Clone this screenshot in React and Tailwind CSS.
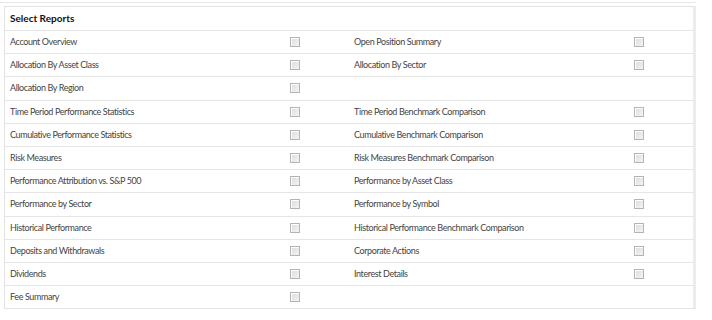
const rows = [
  ['Account Overview', 'Open Position Summary'],
  ['Allocation By Asset Class', 'Allocation By Sector'],
  ['Allocation By Region', null],
  ['Time Period Performance Statistics', 'Time Period Benchmark Comparison'],
  ['Cumulative Performance Statistics', 'Cumulative Benchmark Comparison'],
  ['Risk Measures', 'Risk Measures Benchmark Comparison'],
  ['Performance Attribution vs. S&P 500', 'Performance by Asset Class'],
  ['Performance by Sector', 'Performance by Symbol'],
  ['Historical Performance', 'Historical Performance Benchmark Comparison'],
  ['Deposits and Withdrawals', 'Corporate Actions'],
  ['Dividends', 'Interest Details'],
  ['Fee Summary', null],
];

function Box() {
  return (
    <span className="block w-[10px] h-[10px] border border-[#b4b4b4] bg-gradient-to-br from-[#dcdcdc] to-[#f4f4f4] shadow-[inset_1px_1px_0_#fff]" />
  );
}

export default function App() {
  return (
    <div className="w-[712px] h-[320px] bg-white font-['Lato',sans-serif] text-[9px] tracking-[-0.4px] text-[#444]">
      <div className="pt-[2px] pr-[16px]">
        <div className="border-t border-[#e8e8e8]" />
      </div>
      <div className="mt-[3px] ml-[4px] w-[692px] border border-[#e3e3e3] border-r-[3px] border-r-[#ececec]">
        <div className="h-[23px] flex items-center pl-[5px] text-[10px] tracking-normal font-bold text-[#111]">
          Select Reports
        </div>
        {rows.map(([a, b], i) => (
          <div key={i} className="h-[23.2px] flex items-center border-t border-[#e6e6e6] leading-none">
            <div className="w-[285px] pl-[5px] pb-[1px]">{a}</div>
            <div className="w-[59px]">
              <Box />
            </div>
            <div className="w-[285px] pl-[5px] pb-[1px]">{b}</div>
            <div className="w-[50px]">{b && <Box />}</div>
          </div>
        ))}
      </div>
    </div>
  );
}
